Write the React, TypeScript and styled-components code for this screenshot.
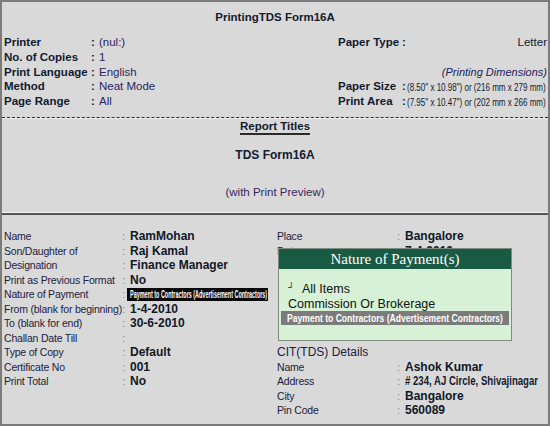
import React from "react";
import styled, { createGlobalStyle } from "styled-components";

const GlobalStyle = createGlobalStyle`
  html, body {
    margin: 0;
    padding: 0;
    overflow: hidden;
    background: #d9d9d9;
  }
  * {
    box-sizing: border-box;
  }
`;

const Frame = styled.div`
  position: relative;
  width: 550px;
  height: 426px;
  border: 2px solid #7b7b7b;
  background: #d9d9d9;
  font-family: "Liberation Sans", Arial, sans-serif;
  color: #141a30;
  display: flex;
  flex-direction: column;
`;

const PrintSection = styled.div`
  height: 116px;
  border-bottom: 1px dashed #2e2e2e;
  display: flex;
  flex-direction: column;
`;

const Heading = styled.div`
  padding-top: 8px;
  line-height: 15px;
  font-size: 11.5px;
  font-weight: 700;
  text-align: center;
`;

const PrintGrid = styled.div`
  margin-top: 10px;
  display: grid;
  grid-template-columns: 334px minmax(0, 1fr);
  padding: 0 1px 0 2px;
`;

const Rows = styled.div`
  display: flex;
  flex-direction: column;
  min-width: 0;
`;

const Row = styled.div<{ $h?: number }>`
  display: flex;
  align-items: center;
  height: ${(p) => p.$h ?? 14.7}px;
  white-space: nowrap;
`;

const BoldLabel = styled.div<{ $w: number }>`
  width: ${(p) => p.$w}px;
  flex-shrink: 0;
  font-size: 11.5px;
  font-weight: 700;
`;

const Colon = styled.span<{ $light?: boolean; $w?: number }>`
  width: ${(p) => p.$w ?? 8}px;
  flex-shrink: 0;
  font-size: 11.5px;
  font-weight: ${(p) => (p.$light ? 400 : 700)};
  color: ${(p) => (p.$light ? "#8a8a8a" : "#1a1a2a")};
`;

const PlainValue = styled.span`
  font-size: 11.5px;
  color: #2a1f5e;
`;

const RightValue = styled.span`
  margin-left: auto;
  font-size: 11.5px;
`;

const Dimensions = styled.span`
  margin-left: auto;
  font-size: 11px;
  font-style: italic;
  color: #24205a;
`;

const NarrowBox = styled.div<{ $w: number }>`
  margin-left: auto;
  width: ${(p) => p.$w}px;
  flex-shrink: 0;
  overflow: hidden;
`;

const Narrow = styled.span<{ $k: number; $size: number; $bold?: boolean }>`
  display: inline-block;
  white-space: nowrap;
  font-size: ${(p) => p.$size}px;
  font-weight: ${(p) => (p.$bold ? 700 : 400)};
  transform: scaleX(${(p) => p.$k});
  transform-origin: left center;
`;

const TitlesSection = styled.div`
  height: 94px;
  border-top: 1px solid #ececec;
  display: flex;
  flex-direction: column;
  align-items: center;
`;

const TitlesLabel = styled.div`
  font-size: 11.5px;
  font-weight: 700;
  line-height: 13px;
  border-bottom: 2px solid #2a2a2a;
  margin-top: 1px;
`;

const FormTitle = styled.div`
  margin-top: 13px;
  font-size: 12px;
  font-weight: 700;
  line-height: 15px;
`;

const Preview = styled.div`
  margin-top: 22px;
  font-size: 11.5px;
  line-height: 14px;
  color: #33285e;
`;

const Divider = styled.div`
  height: 3px;
  border-top: 1px solid #f3f3f3;
  background: #555555;
`;

const DetailSection = styled.div`
  flex: 1;
  padding: 14px 0 0 2px;
  display: grid;
  grid-template-columns: 273px minmax(0, 1fr);
`;

const Label = styled.div<{ $w: number; $size?: number }>`
  width: ${(p) => p.$w}px;
  flex-shrink: 0;
  font-size: ${(p) => p.$size ?? 10.5}px;
  letter-spacing: ${(p) => (p.$size ? 0 : -0.2)}px;
  color: #1c2140;
`;

const Value = styled.span`
  font-size: 12px;
  font-weight: 700;
  color: #111827;
`;

const Highlight = styled.div`
  width: 141px;
  height: 13px;
  margin-left: -3px;
  background: #050505;
  color: #ffffff;
  display: flex;
  align-items: center;
  padding-left: 3px;
  overflow: hidden;
`;

const Popup = styled.div`
  position: absolute;
  left: 276px;
  top: 246px;
  width: 234px;
  height: 93px;
  border: 1px solid #7f8a80;
  background: #d6f1d6;
  display: flex;
  flex-direction: column;
`;

const PopupHeader = styled.div`
  height: 20px;
  background: #195a44;
  color: #ffffff;
  font-family: "Liberation Serif", "Times New Roman", serif;
  font-size: 15px;
  line-height: 20px;
  text-align: center;
`;

const PopupList = styled.div`
  padding-top: 13px;
  display: flex;
  flex-direction: column;
`;

const Item = styled.div<{ $active?: boolean }>`
  height: 14.4px;
  display: flex;
  align-items: center;
  margin: 0 2px;
  padding-left: ${(p) => (p.$active ? 6 : 7)}px;
  font-size: 12.5px;
  color: #111111;
  background: ${(p) => (p.$active ? "#7b7b7b" : "transparent")};
  overflow: hidden;
`;

const Corner = styled.span`
  font-size: 9px;
  width: 14px;
  margin-top: -4px;
`;

type Pair = { label: string; value?: string; narrow?: number };

const leftRows: Pair[] = [
  { label: "Name", value: "RamMohan" },
  { label: "Son/Daughter of", value: "Raj Kamal" },
  { label: "Designation", value: "Finance Manager" },
  { label: "Print as Previous Format", value: "No" },
  { label: "Nature of Payment" },
  { label: "From (blank for beginning)", value: "1-4-2010" },
  { label: "To (blank for end)", value: "30-6-2010" },
  { label: "Challan Date Till", value: "" },
  { label: "Type of Copy", value: "Default" },
  { label: "Certificate No", value: "001" },
  { label: "Print Total", value: "No" },
];

// rows 3..8 of the right column lie under the popup
const rightRows: Pair[] = [
  { label: "Place", value: "Bangalore" },
  { label: "Date", value: "7-4-2010" },
  { label: "" },
  { label: "" },
  { label: "" },
  { label: "" },
  { label: "" },
  { label: "" },
];

const citRows: Pair[] = [
  { label: "Name", value: "Ashok Kumar" },
  { label: "Address", value: "# 234, AJ Circle, Shivajinagar", narrow: 0.8 },
  { label: "City", value: "Bangalore" },
  { label: "Pin Code", value: "560089" },
];

const PAYMENT = "Payment to Contractors (Advertisement Contractors)";

const DetailValue = ({ r }: { r: Pair }) =>
  r.narrow ? (
    <Narrow $k={r.narrow} $size={12} $bold>
      {r.value}
    </Narrow>
  ) : (
    <Value>{r.value}</Value>
  );

export default function App() {
  return (
    <>
      <GlobalStyle />
      <Frame>
        <PrintSection>
          <Heading>PrintingTDS Form16A</Heading>
          <PrintGrid>
            <Rows>
              <Row>
                <BoldLabel $w={87}>Printer</BoldLabel>
                <Colon>:</Colon>
                <PlainValue>(nul:)</PlainValue>
              </Row>
              <Row>
                <BoldLabel $w={87}>No. of Copies</BoldLabel>
                <Colon>:</Colon>
                <PlainValue>1</PlainValue>
              </Row>
              <Row>
                <BoldLabel $w={87}>Print Language</BoldLabel>
                <Colon>:</Colon>
                <PlainValue>English</PlainValue>
              </Row>
              <Row>
                <BoldLabel $w={87}>Method</BoldLabel>
                <Colon>:</Colon>
                <PlainValue>Neat Mode</PlainValue>
              </Row>
              <Row>
                <BoldLabel $w={87}>Page Range</BoldLabel>
                <Colon>:</Colon>
                <PlainValue>All</PlainValue>
              </Row>
            </Rows>
            <Rows>
              <Row>
                <BoldLabel $w={64}>Paper Type</BoldLabel>
                <Colon $w={5}>:</Colon>
                <RightValue>Letter</RightValue>
              </Row>
              <Row />
              <Row>
                <Dimensions>(Printing Dimensions)</Dimensions>
              </Row>
              <Row>
                <BoldLabel $w={64}>Paper Size</BoldLabel>
                <Colon $w={5}>:</Colon>
                <NarrowBox $w={140}>
                  <Narrow $k={0.73} $size={11}>(8.50" x 10.98") or (216 mm x 279 mm)</Narrow>
                </NarrowBox>
              </Row>
              <Row>
                <BoldLabel $w={64}>Print Area</BoldLabel>
                <Colon $w={5}>:</Colon>
                <NarrowBox $w={140}>
                  <Narrow $k={0.73} $size={11}>(7.95" x 10.47") or (202 mm x 266 mm)</Narrow>
                </NarrowBox>
              </Row>
            </Rows>
          </PrintGrid>
        </PrintSection>

        <TitlesSection>
          <TitlesLabel>Report Titles</TitlesLabel>
          <FormTitle>TDS Form16A</FormTitle>
          <Preview>(with Print Preview)</Preview>
        </TitlesSection>

        <Divider />

        <DetailSection>
          <Rows>
            {leftRows.map((r) => (
              <Row key={r.label} $h={14.5}>
                <Label $w={118}>{r.label}</Label>
                <Colon $light>:</Colon>
                {r.value === undefined ? (
                  <Highlight>
                    <Narrow $k={0.545} $size={10} $bold>
                      {PAYMENT}
                    </Narrow>
                  </Highlight>
                ) : (
                  <Value>{r.value}</Value>
                )}
              </Row>
            ))}
          </Rows>
          <Rows>
            {rightRows.map((r, i) => (
              <Row key={i} $h={14.5}>
                <Label $w={120}>{r.label}</Label>
                {r.label && <Colon $light>:</Colon>}
                <Value>{r.value}</Value>
              </Row>
            ))}
            <Row $h={14.5}>
              <Label $w={160} $size={12}>
                CIT(TDS) Details
              </Label>
            </Row>
            {citRows.map((r) => (
              <Row key={r.label} $h={14.5}>
                <Label $w={120}>{r.label}</Label>
                <Colon $light>:</Colon>
                <DetailValue r={r} />
              </Row>
            ))}
          </Rows>
        </DetailSection>

        <Popup>
          <PopupHeader>Nature of Payment(s)</PopupHeader>
          <PopupList>
            <Item>
              <Corner>┘</Corner>
              All Items
            </Item>
            <Item>Commission Or Brokerage</Item>
            <Item $active>
              <Narrow $k={0.78} $size={11} $bold style={{ color: "#ffffff" }}>
                {PAYMENT}
              </Narrow>
            </Item>
          </PopupList>
        </Popup>
      </Frame>
    </>
  );
}
